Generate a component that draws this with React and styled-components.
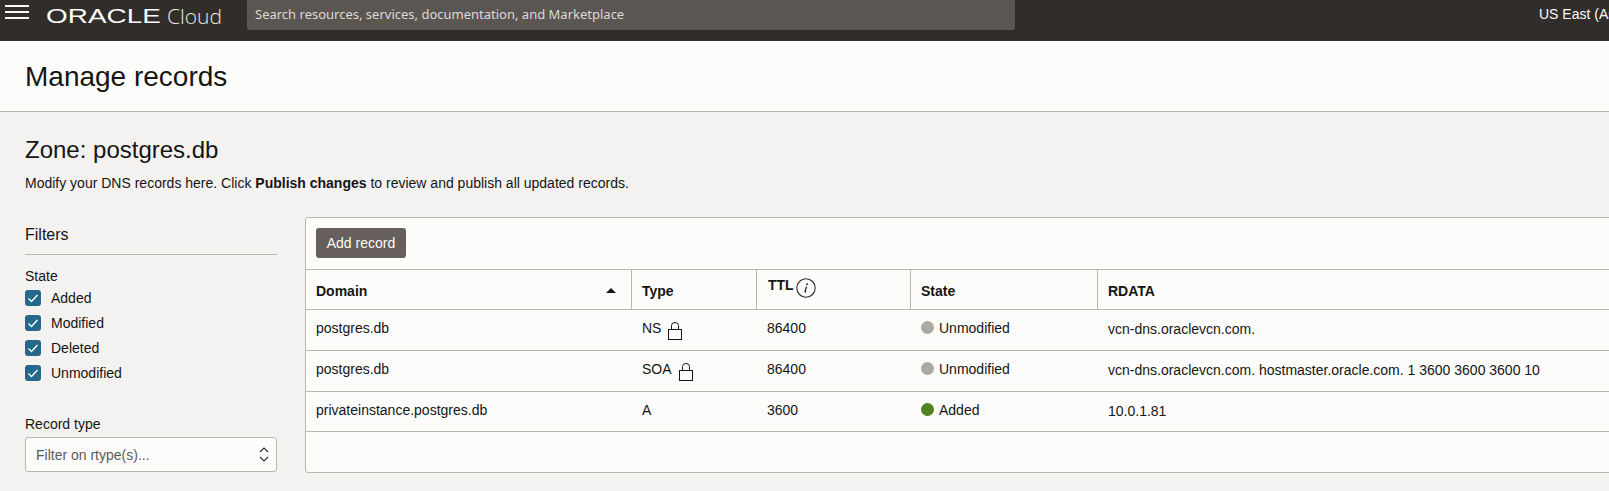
import styled, { createGlobalStyle } from "styled-components";

const GlobalStyle = createGlobalStyle`
  html, body {
    margin: 0;
    height: 491px;
    overflow: hidden;
    background: #f3f2f1;
    font-family: "Liberation Sans", Arial, sans-serif;
    font-size: 14px;
    color: #161513;
  }
  * { box-sizing: border-box; }
`;

const Page = styled.div`
  width: 1609px;
  height: 491px;
  overflow: hidden;
`;

/* top bar */
const TopBar = styled.header`
  height: 41px;
  display: flex;
  align-items: flex-start;
  background: #312d2a;
  color: #fcfbfa;
`;
const MenuButton = styled.div`
  width: 24px;
  height: 14px;
  margin: 5px 0 0 5px;
  display: flex;
  flex-direction: column;
  justify-content: space-between;
  flex: none;
`;
const MenuLine = styled.span`
  display: block;
  height: 2px;
  background: #fcfbfa;
`;
const Logo = styled.div`
  width: 121px;
  margin: 4px 0 0 17px;
  height: 24px;
  flex: none;
  line-height: 24px;
  white-space: nowrap;
`;
const LogoMark = styled.span`
  display: inline-block;
  font-size: 21px;
  transform: scaleX(1.33);
  transform-origin: left center;
`;
const ProductName = styled.div`
  width: 80px;
  margin: 3px 0 0 0;
  font-family: "Open Sans", sans-serif;
  font-weight: 300;
  font-size: 21px;
  line-height: 26px;
  flex: none;
  color: #e8e6e3;
`;
const SearchBox = styled.div`
  width: 768px;
  height: 30px;
  flex: none;
  background: #5b5652;
  border-radius: 0 0 3px 3px;
  padding: 0 8px;
  font-family: "Noto Sans", sans-serif;
  font-size: 13px;
  line-height: 29px;
  color: #dcdad6;
`;
const Region = styled.div`
  margin: 5px 0 0 524px;
  font-size: 14px;
  line-height: 18px;
  white-space: nowrap;
`;

/* title */
const TitleBar = styled.div`
  height: 71px;
  padding: 18px 0 0 25px;
  background: #fcfcfb;
  border-bottom: 1px solid #bcb6b1;
`;
const PageTitle = styled.h1`
  margin: 0;
  font-size: 28px;
  font-weight: 400;
  line-height: 36px;
`;

/* content */
const Content = styled.main`
  padding: 23px 0 0 25px;
`;
const ZoneTitle = styled.h2`
  margin: 0;
  font-size: 24px;
  font-weight: 400;
  line-height: 30px;
`;
const Description = styled.p`
  margin: 9px 0 0;
  line-height: 18px;
`;
const Columns = styled.div`
  margin-top: 25px;
  display: flex;
  gap: 28px;
`;

/* filters */
const Sidebar = styled.aside`
  width: 252px;
  flex: none;
`;
const FiltersTitle = styled.div`
  height: 38px;
  padding-top: 8px;
  font-size: 16px;
  line-height: 20px;
  border-bottom: 1px solid #bcb6b1;
`;
const FilterLabel = styled.div`
  margin-top: ${(p) => p.$top}px;
  line-height: 18px;
`;
const CheckList = styled.div`
  margin-top: 5px;
  display: flex;
  flex-direction: column;
  gap: 9px;
`;
const CheckRow = styled.label`
  display: flex;
  align-items: center;
  gap: 10px;
  height: 16px;
`;
const CheckBox = styled.span`
  width: 16px;
  height: 16px;
  border-radius: 3px;
  background: #266889;
  display: flex;
  align-items: center;
  justify-content: center;
`;
const Select = styled.div`
  margin-top: 4px;
  height: 35px;
  padding: 0 7px 0 10px;
  display: flex;
  align-items: center;
  justify-content: space-between;
  background: #fcfcfb;
  border: 1px solid #bcb6b1;
  border-radius: 3px;
  color: #5f5a56;
`;

/* records */
const Card = styled.section`
  width: 1400px;
  height: 256px;
  flex: none;
  background: #fcfcfb;
  border: 1px solid #bcb6b1;
  border-radius: 3px;
`;
const Toolbar = styled.div`
  height: 51px;
  padding: 10px 10px 0;
`;
const AddButton = styled.button`
  width: 90px;
  height: 30px;
  padding: 0;
  border: 0;
  border-radius: 3px;
  background: #665f5b;
  color: #fcfbfa;
  font: inherit;
  font-weight: 400;
`;
const Table = styled.table`
  width: 100%;
  table-layout: fixed;
  border-collapse: separate;
  border-spacing: 0;
`;
const Th = styled.th`
  width: ${(p) => (p.$width ? `${p.$width}px` : "auto")};
  height: 41px;
  padding: 2px 10px 0;
  text-align: left;
  font-weight: 700;
  border-top: 1px solid #bcb6b1;
  border-bottom: 1px solid #bcb6b1;
  border-right: ${(p) => (p.$last ? "0" : "1px solid #bcb6b1")};
`;
const HeadInner = styled.div`
  display: flex;
  align-items: center;
  justify-content: space-between;
  padding-right: 5px;
`;
const TtlHead = styled.div`
  display: flex;
  align-items: flex-start;
  gap: 2px;
  margin-top: -6px;
  padding-left: 1px;
`;
const Td = styled.td`
  height: ${(p) => p.$height || 41}px;
  padding: 9px 10px 0;
  vertical-align: top;
  line-height: 18px;
  border-bottom: 1px solid #bcb6b1;
`;
const TypeCell = styled.div`
  display: flex;
  align-items: flex-start;
  gap: 7px;
`;
const StateCell = styled.div`
  display: flex;
  align-items: center;
  gap: 5px;
`;
const Dot = styled.span`
  width: 13px;
  height: 13px;
  border-radius: 50%;
  background: ${(p) => p.$color};
  flex: none;
  margin-top: -2px;
`;
const RData = styled.div`
  padding-top: 1px;
`;

function Check() {
  return (
    <svg width="12" height="12" viewBox="0 0 12 12" fill="none">
      <path d="M1.5 6.5 L4.5 9.5 L10.5 3" stroke="#fff" strokeWidth="1.4" />
    </svg>
  );
}

function Lock() {
  return (
    <svg width="14" height="18" viewBox="0 0 14 18" fill="none" stroke="#161513" strokeWidth="1" style={{ flex: "none", marginTop: 3 }}>
      <rect x="0.5" y="7.5" width="13" height="10" />
      <path d="M3.5 7.5 V3.5 a3.5 3 0 0 1 7 0 V7.5" />
    </svg>
  );
}

function InfoIcon() {
  return (
    <svg width="20" height="20" viewBox="0 0 20 20" fill="none" style={{ flex: "none", marginTop: 1 }}>
      <circle cx="10" cy="10" r="9.2" stroke="#312d2a" strokeWidth="1.1" />
      <path d="M10.6 8.6 L9 13.4 q-.2 .9 1.2 .1" stroke="#161513" strokeWidth="1.2" />
      <circle cx="11" cy="6.2" r="0.9" fill="#161513" />
    </svg>
  );
}

function SortArrow() {
  return (
    <svg width="10" height="5" viewBox="0 0 10 5" style={{ flex: "none" }}>
      <path d="M0 5 L5 0 L10 5 Z" fill="#161513" />
    </svg>
  );
}

function Chevrons() {
  return (
    <svg width="10" height="15" viewBox="0 0 10 15" fill="none" stroke="#312d2a" strokeWidth="1.1">
      <path d="M1 5 L5 1 L9 5" />
      <path d="M1 10 L5 14 L9 10" />
    </svg>
  );
}

const states = ["Added", "Modified", "Deleted", "Unmodified"];

const records = [
  { domain: "postgres.db", type: "NS", locked: true, ttl: "86400", state: "Unmodified", color: "#aea8a3", rdata: "vcn-dns.oraclevcn.com." },
  { domain: "postgres.db", type: "SOA", locked: true, ttl: "86400", state: "Unmodified", color: "#aea8a3", rdata: "vcn-dns.oraclevcn.com. hostmaster.oracle.com. 1 3600 3600 3600 10" },
  { domain: "privateinstance.postgres.db", type: "A", ttl: "3600", state: "Added", color: "#508223", rdata: "10.0.1.81", height: 40 },
];

export default function App() {
  return (
    <Page>
      <GlobalStyle />
      <TopBar>
        <MenuButton>
          <MenuLine />
          <MenuLine />
          <MenuLine />
        </MenuButton>
        <Logo>
          <LogoMark>ORACLE</LogoMark>
        </Logo>
        <ProductName>Cloud</ProductName>
        <SearchBox>Search resources, services, documentation, and Marketplace</SearchBox>
        <Region>US East (Ashburn)</Region>
      </TopBar>
      <TitleBar>
        <PageTitle>Manage records</PageTitle>
      </TitleBar>
      <Content>
        <ZoneTitle>Zone: postgres.db</ZoneTitle>
        <Description>
          Modify your DNS records here. Click <strong>Publish changes</strong> to review and publish all updated records.
        </Description>
        <Columns>
          <Sidebar>
            <FiltersTitle>Filters</FiltersTitle>
            <FilterLabel $top={12}>State</FilterLabel>
            <CheckList>
              {states.map((s) => (
                <CheckRow key={s}>
                  <CheckBox>
                    <Check />
                  </CheckBox>
                  {s}
                </CheckRow>
              ))}
            </CheckList>
            <FilterLabel $top={34}>Record type</FilterLabel>
            <Select>
              Filter on rtype(s)...
              <Chevrons />
            </Select>
          </Sidebar>
          <Card>
            <Toolbar>
              <AddButton>Add record</AddButton>
            </Toolbar>
            <Table>
              <thead>
                <tr>
                  <Th $width={326}>
                    <HeadInner>
                      Domain
                      <SortArrow />
                    </HeadInner>
                  </Th>
                  <Th $width={125}>Type</Th>
                  <Th $width={154}>
                    <TtlHead>
                      TTL
                      <InfoIcon />
                    </TtlHead>
                  </Th>
                  <Th $width={187}>State</Th>
                  <Th $last>RDATA</Th>
                </tr>
              </thead>
              <tbody>
                {records.map((r) => (
                  <tr key={r.domain + r.type}>
                    <Td $height={r.height}>{r.domain}</Td>
                    <Td $height={r.height}>
                      <TypeCell>
                        {r.type}
                        {r.locked && <Lock />}
                      </TypeCell>
                    </Td>
                    <Td $height={r.height}>{r.ttl}</Td>
                    <Td $height={r.height}>
                      <StateCell>
                        <Dot $color={r.color} />
                        {r.state}
                      </StateCell>
                    </Td>
                    <Td $height={r.height}>
                      <RData>{r.rdata}</RData>
                    </Td>
                  </tr>
                ))}
              </tbody>
            </Table>
          </Card>
        </Columns>
      </Content>
    </Page>
  );
}
